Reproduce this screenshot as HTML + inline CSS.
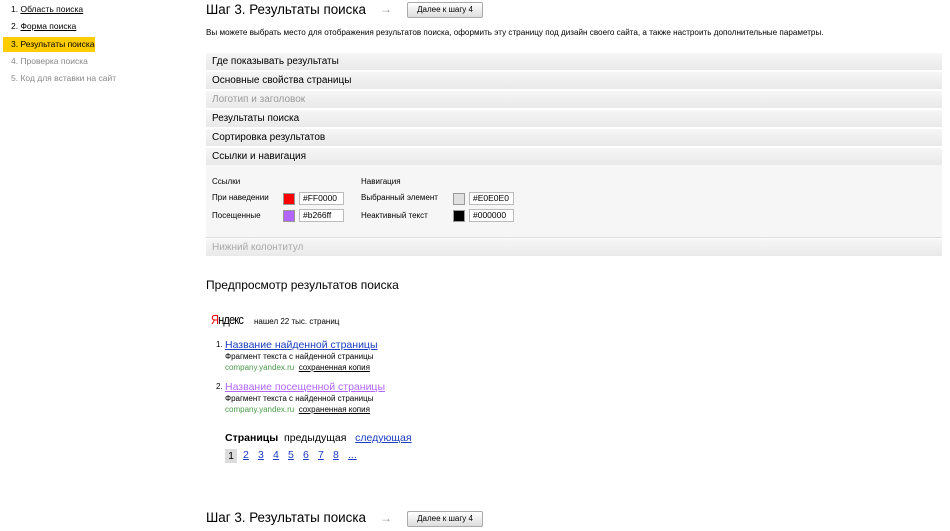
<!DOCTYPE html>
<html><head><meta charset="utf-8"><style>
body{margin:0;width:950px;height:531px;background:#fff;font-family:"Liberation Sans",Arial,sans-serif;color:#000;position:relative;overflow:hidden}
.a{position:absolute;white-space:nowrap}
.nav{font-size:8.5px}
.nav a{color:#000;text-decoration:underline}
.bar{position:absolute;left:206px;width:736px;height:17px;background:linear-gradient(#f6f6f6,#e9e9e9);font-size:10px;line-height:17px;padding-left:6px;box-sizing:border-box}
.btn{position:absolute;height:14px;border:1px solid #aaa;border-radius:2px;background:linear-gradient(#fff,#ddd);font-size:8px;line-height:14px;text-align:center}
.sm{font-size:8px}
.sw{position:absolute;width:12px;height:12px;border:1px solid #999;box-sizing:border-box}
.in{position:absolute;width:45px;height:13px;border:1px solid #bbb;box-sizing:border-box;font-size:8.5px;line-height:11px;padding-left:3px;background:#fff}
.lk{color:#1a3dc1;text-decoration:underline}
.vl{color:#b266ff;text-decoration:underline}
.gr{color:#4a9a4a}
.sv{color:#000;text-decoration:underline}
.pn{position:absolute;top:449px;font-size:10.5px;color:#1a3dc1;text-decoration:underline}
.ttl{font-size:13.4px}
.arr{font-size:12px;color:#999}
</style></head><body>
<div class="a nav" style="left:11px;top:4px">1. <a>Область поиска</a></div>
<div class="a nav" style="left:11px;top:21px">2. <a>Форма поиска</a></div>
<div class="a nav" style="left:3px;top:37px;background:#ffcc00;padding:2px 8px;height:11px;line-height:11px;width:76px">3. Результаты поиска</div>
<div class="a nav" style="left:11px;top:56px;color:#888">4. Проверка поиска</div>
<div class="a nav" style="left:11px;top:73px;color:#888">5. Код для вставки на сайт</div>

<div class="a ttl" style="left:206px;top:2px">Шаг 3. Результаты поиска</div>
<div class="a arr" style="left:380px;top:2px">→</div>
<div class="btn" style="left:407px;top:2px;width:74px">Далее к шагу 4</div>
<div class="a" style="left:206px;top:28px;font-size:8.15px">Вы можете выбрать место для отображения результатов поиска, оформить эту страницу под дизайн своего сайта, а также настроить дополнительные параметры.</div>

<div class="bar" style="top:53px">Где показывать результаты</div>
<div class="bar" style="top:72px">Основные свойства страницы</div>
<div class="bar" style="top:91px;color:#999">Логотип и заголовок</div>
<div class="bar" style="top:110px">Результаты поиска</div>
<div class="bar" style="top:129px">Сортировка результатов</div>
<div class="bar" style="top:148px">Ссылки и навигация</div>
<div class="a" style="left:206px;top:165px;width:736px;height:72px;background:#f6f6f6;border-bottom:1px solid #ddd"></div>
<div class="a sm" style="left:212px;top:177px">Ссылки</div>
<div class="a sm" style="left:212px;top:193px">При наведении</div>
<div class="a sm" style="left:212px;top:211px">Посещенные</div>
<div class="sw" style="left:283px;top:193px;background:#f00"></div>
<div class="in" style="left:299px;top:192px">#FF0000</div>
<div class="sw" style="left:283px;top:210px;background:#b266ff"></div>
<div class="in" style="left:299px;top:209px">#b266ff</div>
<div class="a sm" style="left:361px;top:177px">Навигация</div>
<div class="a sm" style="left:361px;top:193px">Выбранный элемент</div>
<div class="a sm" style="left:361px;top:211px">Неактивный текст</div>
<div class="sw" style="left:453px;top:193px;background:#e0e0e0"></div>
<div class="in" style="left:469px;top:192px">#E0E0E0</div>
<div class="sw" style="left:453px;top:210px;background:#000"></div>
<div class="in" style="left:469px;top:209px">#000000</div>
<div class="bar" style="top:239px;color:#aaa">Нижний колонтитул</div>

<div class="a" style="left:206px;top:278px;font-size:12px">Предпросмотр результатов поиска</div>
<div class="a" style="left:211px;top:312px;font-size:13px;letter-spacing:-1px;transform:scaleX(.85);transform-origin:left"><span style="color:#e00">Я</span>ндекс</div>
<div class="a sm" style="left:254px;top:317px">нашел 22 тыс. страниц</div>
<div class="a" style="left:216px;top:340px;font-size:8px">1.</div>
<div class="a lk" style="left:225px;top:339px;font-size:10.5px">Название найденной страницы</div>
<div class="a sm" style="left:225px;top:352px">Фрагмент текста с найденной страницы</div>
<div class="a sm" style="left:225px;top:363px"><span class="gr">company.yandex.ru</span>&nbsp; <span class="sv">сохраненная копия</span></div>
<div class="a" style="left:216px;top:382px;font-size:8px">2.</div>
<div class="a vl" style="left:225px;top:381px;font-size:10.5px">Название посещенной страницы</div>
<div class="a sm" style="left:225px;top:394px">Фрагмент текста с найденной страницы</div>
<div class="a sm" style="left:225px;top:405px"><span class="gr">company.yandex.ru</span>&nbsp; <span class="sv">сохраненная копия</span></div>
<div class="a" style="left:225px;top:432px;font-size:10.5px"><b>Страницы</b>&nbsp; предыдущая &nbsp; <span class="lk">следующая</span></div>
<div class="a" style="left:225px;top:449px;width:12px;height:14px;background:#ddd;font-size:10.5px;text-align:center;line-height:14px">1</div>
<div class="pn" style="left:243px">2</div>
<div class="pn" style="left:258px">3</div>
<div class="pn" style="left:273px">4</div>
<div class="pn" style="left:288px">5</div>
<div class="pn" style="left:303px">6</div>
<div class="pn" style="left:318px">7</div>
<div class="pn" style="left:333px">8</div>
<div class="pn" style="left:348px">...</div>

<div class="a ttl" style="left:206px;top:510px">Шаг 3. Результаты поиска</div>
<div class="a arr" style="left:380px;top:511px">→</div>
<div class="btn" style="left:407px;top:511px;width:74px">Далее к шагу 4</div>
</body></html>
